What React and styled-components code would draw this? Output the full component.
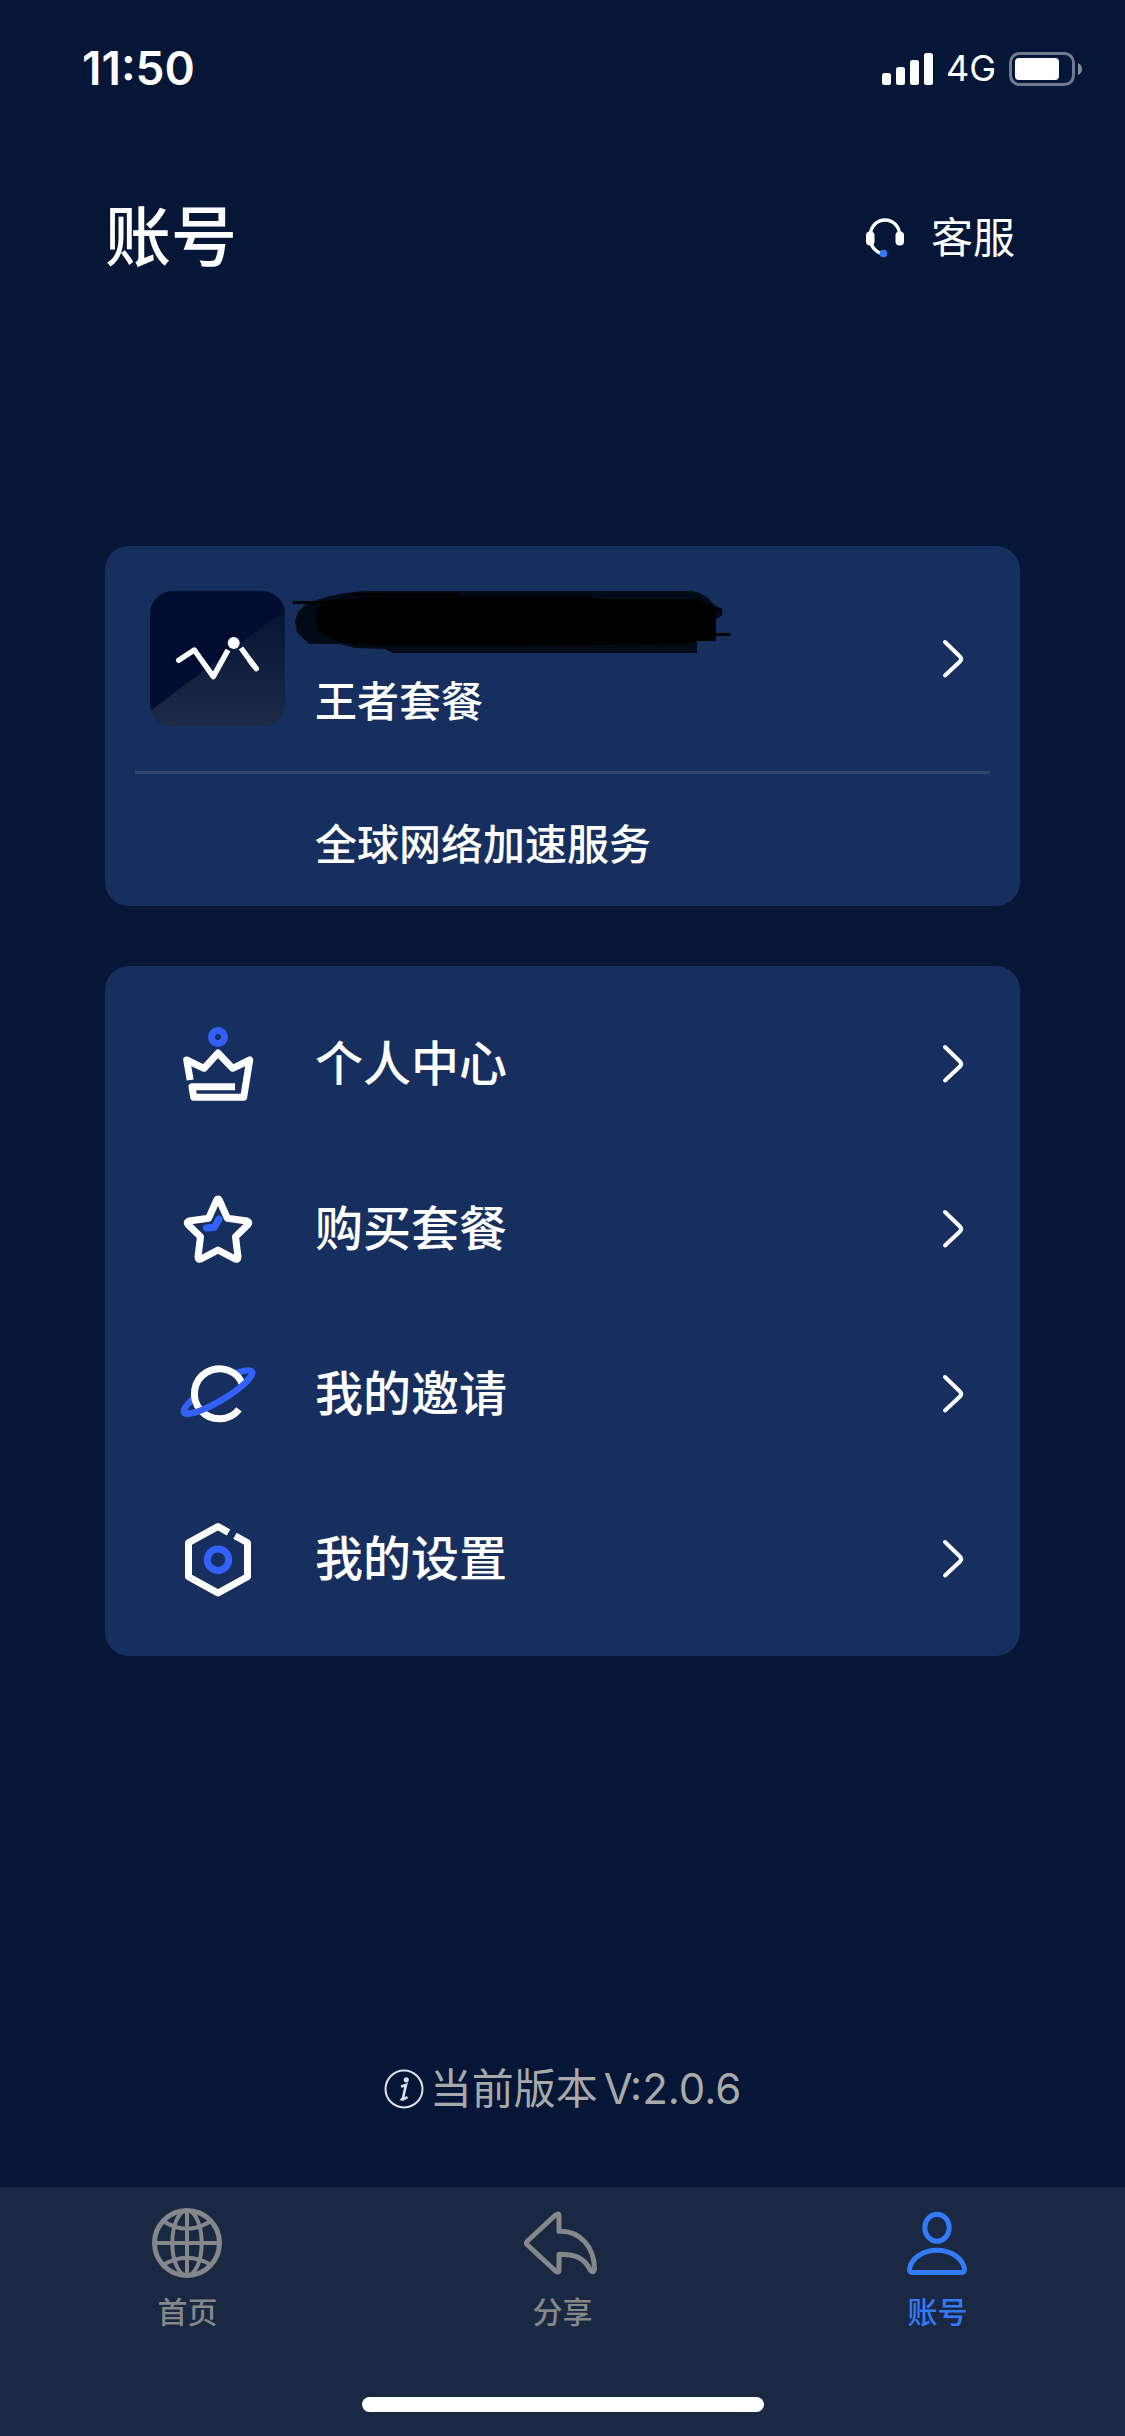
import React from "react";
import styled, {createGlobalStyle} from "styled-components";

const GlobalStyle = createGlobalStyle`
    * {
        box-sizing: border-box;
    }
    body {
        margin: 0;
        background-color: #051636;
        font-family: Inter, "Noto Sans CJK SC", sans-serif;
        line-height: 1.2;
        color: white;
    }
    button {
        font-family: inherit;
        line-height: inherit;
        color: inherit;
    }
`

const Container = styled.div`
    min-height: 100vh;
    display: flex;
    flex-direction: column;
`

const StatusBar = styled.div`
    height: 138px;
    padding: 0 42px 0 82px;
    display: flex;
    align-items: center;
    justify-content: space-between;
`
const Time = styled.span`
    font-size: 46px;
    font-weight: 600;
`
const StatusRight = styled.div`
    display: flex;
    align-items: center;
    gap: 13px;
`
const Network = styled.span`
    font-size: 36px;
`

const Header = styled.header`
    height: 200px;
    padding: 0 110px 0 105px;
    display: flex;
    align-items: center;
    justify-content: space-between;
`
const Title = styled.h1`
    margin: 0;
    font-size: 66px;
    font-weight: 500;
`
const ServiceButton = styled.button`
    display: flex;
    align-items: center;
    gap: 26px;
    padding: 0;
    border: none;
    background-color: transparent;
    font-size: 42px;
    cursor: pointer;
`

const Main = styled.main`
    flex: 1;
    display: flex;
    flex-direction: column;
    padding: 208px 105px 68px;
`
const Card = styled.section`
    background-color: #172f5e;
    border-radius: 24px;
    margin-bottom: 60px;
    padding: ${props=>props.type === "menu" ? "15px 0" : "0"};
`

const Account = styled.button`
    width: 100%;
    display: flex;
    align-items: center;
    gap: 30px;
    padding: 45px 55px 45px 45px;
    border: none;
    background-color: transparent;
    text-align: left;
    cursor: pointer;
`
const AccountInfo = styled.span`
    flex: 1;
    height: 135px;
    display: flex;
    flex-direction: column;
    justify-content: space-between;
`
const Scribble = styled.svg`
    display: block;
    margin-left: -23px;
`
const PlanName = styled.span`
    font-size: 42px;
    font-weight: 500;
    line-height: 48px;
`
const Hr = styled.hr`
    margin: 0 30px;
    height: 3px;
    border: none;
    background-color: #31456f;
`
const PlanDesc = styled.p`
    margin: 0;
    padding: 47px 54px 37px 210px;
    font-size: 42px;
    font-weight: 500;
    line-height: 48px;
`

const MenuItem = styled.button`
    width: 100%;
    height: 165px;
    display: flex;
    align-items: center;
    gap: 59px;
    padding: 0 55px 0 76px;
    border: none;
    background-color: transparent;
    font-size: 48px;
    font-weight: 500;
    text-align: left;
    cursor: pointer;
`
const MenuText = styled.span`
    flex: 1;
`
const Icon = styled.svg`
    display: block;
    flex: none;
    overflow: visible;
    fill: none;
    stroke: ${props=>props.$color || "white"};
    stroke-width: ${props=>props.$line || 7}px;
`

const Version = styled.p`
    margin: auto 0 0;
    display: flex;
    align-items: center;
    justify-content: center;
    gap: 6px;
    color: #a9a9a9;
    font-size: 42px;
    line-height: 60px;
`

const Footer = styled.footer`
    height: 249px;
    display: flex;
    flex-direction: column;
    justify-content: space-between;
    align-items: center;
    padding: 20px 0 24px;
    background-color: #1b2843;
    box-shadow: 0 -1px 0 #041025;
`
const Tabs = styled.nav`
    width: 100%;
    display: grid;
    grid-template-columns: repeat(3, 1fr);
`
const Tab = styled.a`
    display: flex;
    flex-direction: column;
    align-items: center;
    gap: 12px;
    color: ${props=>props.$active ? "#347bf8" : "#858789"};
    font-size: 30px;
    font-weight: 500;
    line-height: 42px;
    text-decoration: none;
`
const HomeIndicator = styled.div`
    width: 402px;
    height: 15px;
    border-radius: 8px;
    background-color: white;
`

const BLUE = "#3262fb"

const Signal = () => (
    <svg width="51" height="34" fill="white" aria-hidden="true">
        <rect x="0" y="21" width="9" height="12" rx="2.5"/>
        <rect x="14" y="15" width="9" height="18" rx="2.5"/>
        <rect x="28" y="8" width="9" height="25" rx="2.5"/>
        <rect x="42" y="1" width="9" height="32" rx="2.5"/>
    </svg>
)

const Battery = () => (
    <svg width="74" height="34" aria-hidden="true">
        <rect x="1.5" y="1.5" width="63" height="31" rx="9" fill="none" stroke="#6f7a8f" strokeWidth="3"/>
        <rect x="6" y="6" width="44" height="22" rx="4" fill="white"/>
        <path d="M69 11 Q73 13 73 17 Q73 21 69 23 Z" fill="#858e9f"/>
    </svg>
)

const Headset = () => (
    <svg width="40" height="40" aria-hidden="true">
        <path d="M5.5 18 V16.5 A14.5 14.5 0 0 1 34.5 16.5 V18 M5.5 24 Q8 32.500 16 35.500" fill="none" stroke="white" strokeWidth="3.4"/>
        <rect x="1" y="13.500" width="8.500" height="14" rx="4" fill="white"/>
        <rect x="30.500" y="13.500" width="8.500" height="14" rx="4" fill="white"/>
        <circle cx="18.500" cy="35.500" r="3.800" fill="#347bf8"/>
    </svg>
)

const Logo = () => (
    <svg width="135" height="135" viewBox="0 0 135 135" aria-hidden="true">
        <defs>
            <clipPath id="logoClip">
                <rect width="135" height="135" rx="23"/>
            </clipPath>
            <linearGradient id="logoShade" x1="0" y1="0" x2="0" y2="1">
                <stop offset="0" stopColor="#041433"/>
                <stop offset="1" stopColor="#1d2b47"/>
            </linearGradient>
        </defs>
        <g clipPath="url(#logoClip)">
            <rect width="135" height="135" fill="#000d30"/>
            <path d="M0 120 L135 19 V135 H0 Z" fill="url(#logoShade)"/>
        </g>
        <g fill="none" stroke="white" strokeWidth="5.4" strokeLinejoin="round">
            <path d="M44.300 59 L63.300 85.600 L78 59"/>
            <path d="M28.700 69.300 L44.300 59" strokeLinecap="round"/>
            <path d="M91 57 L104.500 75.500"/>
            <path d="M100 69.500 L106.300 77.700" strokeLinecap="round"/>
        </g>
        <circle cx="83.700" cy="52" r="6" fill="white"/>
    </svg>
)

// marker strokes over the account name
const HiddenName = () => (
    <Scribble width="440" height="64" viewBox="0 0 440 64" aria-hidden="true">
        <path
            d="M3 30 L6 21 L13 14 L25 9 L38 5 L53 2 L73 0 H399 L408 2 L416 7 L421 13 L430 20 L430 24 L425 28 L405 36 V62 H101 L93 58 L63 57 L48 53 H17 L5 41 Z"
            fill="#020a15"
        />
        <path
            d="M24 30 L25 19 L30 11 L48 8 H405 L424 17 V50 H405 L394 53 L200 55 H94 L60 53 L40 48 L27 40 Z"
            fill="black"
        />
        <path
            d="M2 11.500 H60 M62 3.500 H165 M66 7.500 H300 M380 15 H418 L429 19 M380 43.500 H437 M250 51.500 H394"
            fill="none" stroke="black" strokeWidth="3" strokeLinecap="round"
        />
    </Scribble>
)

const Chevron = () => (
    <Icon width="22" height="40" $line={4} strokeLinecap="round" strokeLinejoin="round" aria-hidden="true">
        <path d="M2 3 L17.200 17.800 Q19.200 20 17.200 22.200 L2 36.500"/>
    </Icon>
)

const Crown = () => (
    <Icon width="75" height="75" strokeLinejoin="round" aria-hidden="true">
        <circle cx="37" cy="11" r="6.500" stroke={BLUE}/>
        <path d="M9.200 54 L5.700 34 L23 42.300 L37 27 L51.700 42.300 L68.700 34 L62.700 71.300 H12.700 L11 60.700 H54"/>
    </Icon>
)

const Star = () => (
    <Icon width="75" height="75" strokeLinejoin="round" aria-hidden="true">
        <path d="M35.500 9.500 Q37 6.500 38.500 9.500 L46.300 27.200 L66 30 Q69 31 67 33.500 L54.500 45.700 L57 66 Q57 69 54 68 L37 59 L20 68 Q17 69 17 66 L19.500 45.700 L7 33.500 Q5 31 8 30 L27.700 27.200 Z"/>
        <path d="M25.500 37 L33.500 36.200 L38 28" stroke={BLUE} strokeLinecap="round"/>
    </Icon>
)

const Planet = () => (
    <Icon width="75" height="75" aria-hidden="true">
        <ellipse cx="37" cy="36" rx="39.500" ry="8.800" transform="rotate(-31 37 36)" stroke={BLUE} strokeWidth="6.4"/>
        <circle cx="38.300" cy="37.700" r="25" fill="#172f5e" stroke="none"/>
        <path d="M58 53.300 A25 25 0 1 1 62 29.500"/>
        <path d="M-2.500 36 A39.500 8.800 0 0 0 76.500 36" transform="rotate(-31 37 36)" stroke={BLUE} strokeWidth="6.4"/>
    </Icon>
)

const Hexagon = () => (
    <Icon width="75" height="75" strokeLinejoin="round" aria-hidden="true">
        <path d="M47.500 11.500 L37 5.500 L7.500 21.700 V55.700 L37 72 L66.500 55.700 V21.700 L54 14.800"/>
        <circle cx="37" cy="38.700" r="10.700" stroke={BLUE}/>
    </Icon>
)

const Info = () => (
    <Icon width="40" height="40" $color="#dfe3ec" $line={2} aria-hidden="true">
        <circle cx="20" cy="20" r="18.500"/>
        <path d="M17 17.500 Q21 16.500 22 16 L19 29 Q20 30.500 23.500 28 M16.500 30 Q18 31 20 30" strokeWidth="2.6"/>
        <circle cx="22.300" cy="10.800" r="1.600" fill="#dfe3ec"/>
    </Icon>
)

const Globe = () => (
    <Icon width="72" height="72" $color="currentColor" $line={4} aria-hidden="true">
        <circle cx="35" cy="36" r="32.500" strokeWidth="5"/>
        <ellipse cx="35" cy="36" rx="14.700" ry="32.500"/>
        <path d="M35 3 V69 M3 36 H68 M11 14 Q35 29.500 59 14 M11 58 Q35 43.500 59 58"/>
    </Icon>
)

const Share = () => (
    <Icon width="72" height="72" $color="currentColor" $line={5} strokeLinejoin="round" aria-hidden="true">
        <path d="M0.500 38 Q-1.500 36 0.500 34 L28.500 8 Q32 5.500 32 9 V24.300 C53 23.500 67.500 40 67.500 62.500 Q66.500 66.500 63.500 63.500 C57 50 47 47.300 32 47.300 V63 Q32 66.500 28.500 64 Z"/>
    </Icon>
)

const Person = () => (
    <Icon width="72" height="72" $color="currentColor" $line={5} aria-hidden="true">
        <ellipse cx="35" cy="20.700" rx="12.200" ry="13.500"/>
        <path d="M11 65.500 H59 Q63 65.500 62.500 62 C61 51.500 49 43.200 35 43.200 C21 43.200 9 51.500 7.500 62 Q7 65.500 11 65.500 Z"/>
    </Icon>
)

const menuItems = [
    {text: "个人中心", icon: <Crown/>},
    {text: "购买套餐", icon: <Star/>},
    {text: "我的邀请", icon: <Planet/>},
    {text: "我的设置", icon: <Hexagon/>},
]

const tabs = [
    {text: "首页", icon: <Globe/>, href: "#home"},
    {text: "分享", icon: <Share/>, href: "#share"},
    {text: "账号", icon: <Person/>, href: "#account", active: true},
]

const App = () => {
    return (
        <Container>
            <GlobalStyle/>
            <StatusBar>
                <Time>11:50</Time>
                <StatusRight>
                    <Signal/>
                    <Network>4G</Network>
                    <Battery/>
                </StatusRight>
            </StatusBar>
            <Header>
                <Title>账号</Title>
                <ServiceButton>
                    <Headset/>
                    客服
                </ServiceButton>
            </Header>
            <Main>
                <Card>
                    <Account>
                        <Logo/>
                        <AccountInfo>
                            <HiddenName/>
                            <PlanName>王者套餐</PlanName>
                        </AccountInfo>
                        <Chevron/>
                    </Account>
                    <Hr/>
                    <PlanDesc>全球网络加速服务</PlanDesc>
                </Card>
                <Card type="menu">
                    {menuItems.map((item)=>(
                        <MenuItem key={item.text}>
                            {item.icon}
                            <MenuText>{item.text}</MenuText>
                            <Chevron/>
                        </MenuItem>
                    ))}
                </Card>
                <Version>
                    <Info/>
                    <span>当前版本</span>
                    <span>V:2.0.6</span>
                </Version>
            </Main>
            <Footer>
                <Tabs>
                    {tabs.map((tab)=>(
                        <Tab key={tab.text} href={tab.href} $active={tab.active}>
                            {tab.icon}
                            {tab.text}
                        </Tab>
                    ))}
                </Tabs>
                <HomeIndicator/>
            </Footer>
        </Container>
    )
}

export default App;
